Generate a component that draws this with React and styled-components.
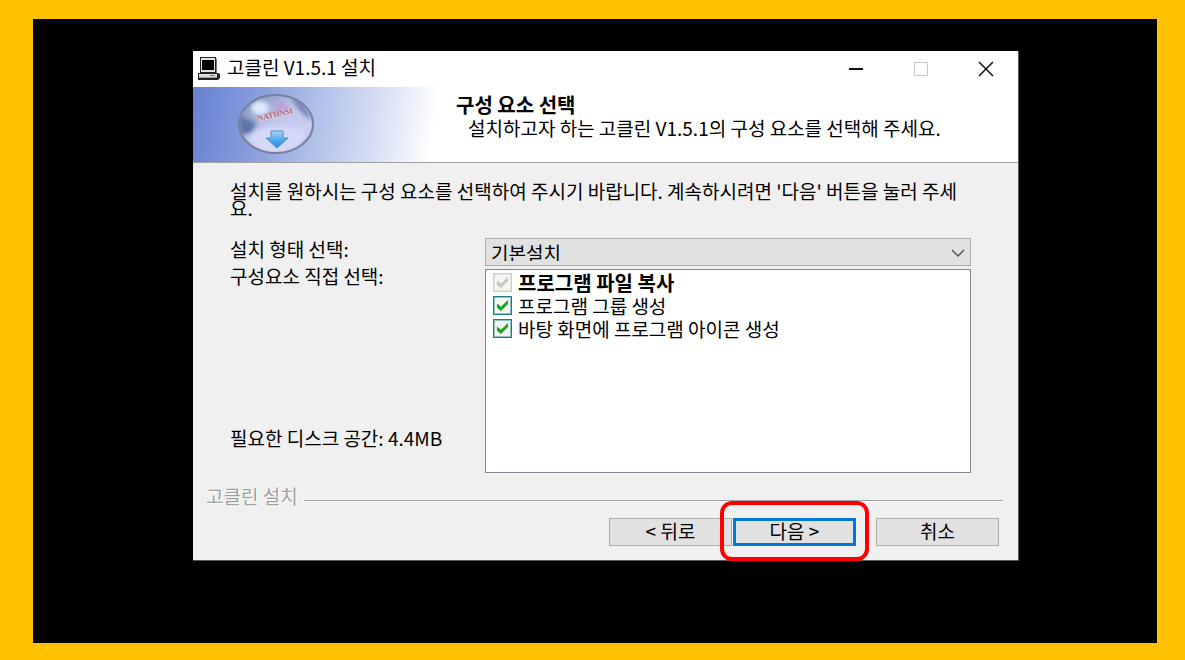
import React, { useState } from 'react';
import styled, { createGlobalStyle } from 'styled-components';

const GlobalStyle = createGlobalStyle`
  * {
    box-sizing: border-box;
  }
  body {
    margin: 0;
    background: #ffc000;
    font-family: "Noto Sans CJK KR", "Noto Sans", sans-serif;
    font-size: 19px;
    color: #000;
  }
  h1, p {
    margin: 0;
  }
`;

const Frame = styled.div`
  display: flex;
  min-height: 100vh;
  padding: 19px 28px 17px 33px;
`;

const Desktop = styled.main`
  flex: 1;
  padding: 32px 138px 80px 160px;
  background: #000;
`;

const Dialog = styled.section`
  background: #f0f0f0;
  border-right: 1px solid #555;
  border-bottom: 1px solid #555;
`;

const TitleBar = styled.header`
  display: flex;
  align-items: center;
  height: 36px;
  padding-left: 4px;
  background: #fff;
`;

const Title = styled.span`
  flex: 1;
  padding-left: 6px;
  line-height: 32px;
  align-self: flex-start;
`;

const WindowButton = styled.button`
  display: flex;
  align-items: center;
  justify-content: center;
  width: 65px;
  height: 34px;
  padding: 0;
  border: none;
  background: transparent;
  color: ${(props) => (props.disabled ? '#c8c8c8' : '#111')};
`;

const Banner = styled.div`
  display: flex;
  height: 76px;
  border-bottom: 1px solid #a0a0a0;
  background: linear-gradient(98deg, #6681d2 0, #8a9fdd 70px, #b4c2ea 130px, #d8e0f4 190px, #fff 245px);
`;

const LogoCell = styled.div`
  width: 263px;
  padding: 6px 0 0 44px;
`;

const Heading = styled.h1`
  padding-top: 6px;
  font-size: 20px;
  font-weight: 700;
  line-height: 24px;
`;

const SubHeading = styled.p`
  padding-left: 12px;
  line-height: 22px;
`;

const Body = styled.div`
  padding: 19px 47px 0 37px;
`;

const Intro = styled.p`
  line-height: 17px;
  word-break: break-all;
`;

const Form = styled.div`
  display: grid;
  grid-template-columns: 255px 1fr;
  row-gap: 3px;
  margin-top: 22px;
`;

const Label = styled.label`
  line-height: 22px;
`;

const SideColumn = styled.div`
  display: flex;
  flex-direction: column;
  justify-content: space-between;
  padding: 0 0 24px;
  line-height: 22px;
  margin-top: -4px;
`;

const SelectWrap = styled.div`
  position: relative;

  svg {
    position: absolute;
    right: 6px;
    top: 10px;
    pointer-events: none;
  }
`;

const Select = styled.select`
  display: block;
  width: 100%;
  height: 28px;
  padding: 0 24px 4px 5px;
  border: 1px solid #acacac;
  border-radius: 0;
  background: #e1e1e1;
  color: #000;
  font: inherit;
  appearance: none;
`;

const List = styled.div`
  height: 204px;
  padding: 1px 7px;
  border: 1px solid #828790;
  background: #fff;
`;

const Option = styled.label`
  display: flex;
  align-items: center;
  gap: 6px;
  height: 23px;
  line-height: 22px;
  font-size: ${(props) => (props.$required ? 20 : 19)}px;
  font-weight: ${(props) => (props.$required ? 700 : 400)};
`;

const Checkbox = styled.input`
  flex: none;
  display: grid;
  place-items: center;
  width: 19px;
  height: 19px;
  margin: 0;
  border: 1px solid #178080;
  background: #f4f4f4;
  box-shadow: inset 0 0 0 1px #8ec3c3;
  appearance: none;

  &:checked::before {
    content: "";
    width: 11px;
    height: 11px;
    background: #1ba51b;
    clip-path: polygon(0 32%, 36% 62%, 100% 0, 100% 36%, 36% 100%, 0 70%);
  }

  &:disabled {
    border-color: #d0d0c0;
    box-shadow: inset 0 0 0 1px #e4e4da;
  }

  &:disabled::before {
    background: #c8c8b8;
  }
`;

const Divider = styled.div`
  display: flex;
  align-items: center;
  gap: 6px;
  margin-top: 11px;
  padding: 0 15px 0 13px;
  line-height: 24px;
  color: #a0a0a0;
  text-shadow: 1px 1px 0 #fff;
`;

const Line = styled.hr`
  flex: 1;
  margin: 9px 0 0;
  border: none;
  border-top: 1px solid #a0a0a0;
  border-bottom: 1px solid #fff;
`;

const Actions = styled.div`
  display: flex;
  justify-content: flex-end;
  padding: 10px 19px 14px;
`;

const Button = styled.button`
  width: 123px;
  height: 28px;
  margin-left: ${(props) => props.$gap || 0}px;
  padding: 0 0 2px;
  border: ${(props) => (props.$primary ? '3px solid #0078d7' : '1px solid #adadad')};
  background: #e1e1e1;
  color: #000;
  font: inherit;
  line-height: 20px;
`;

const Marked = styled.div`
  position: relative;
  display: flex;
  margin-left: 1px;

  &::after {
    content: "";
    position: absolute;
    inset: -17px -13px -15px;
    border: 4px solid #f00;
    border-radius: 12px;
    pointer-events: none;
  }
`;

const ComputerIcon = () => (
  <svg width="24" height="24" viewBox="0 0 24 24" aria-hidden="true">
    <path d="M4 1h15l1 1v14H4z" fill="#777" />
    <path d="M3 0h16v16H3z" fill="#222" />
    <path d="M4 1h14v14H4z" fill="#e4e4e4" />
    <path d="M5 3h12v10H5z" fill="#000" />
    <path d="M1 16h20l2 1v4l-2 2H1z" fill="#222" />
    <path d="M2 17h18v4H2z" fill="#ddd" />
    <path d="M2 20h18v1H2z" fill="#999" />
    <path d="M13 18h5v1h-5z" fill="#777" />
  </svg>
);

const Logo = () => (
  <svg width="78" height="64" viewBox="0 0 78 64" aria-hidden="true">
    <defs>
      <linearGradient id="glass" x1="0" y1="0" x2="1" y2="1">
        <stop offset="0" stopColor="#6c80b0" />
        <stop offset="0.45" stopColor="#bfc6ea" />
        <stop offset="0.75" stopColor="#ccd0f2" />
        <stop offset="1" stopColor="#8ea4dd" />
      </linearGradient>
      <linearGradient id="arrow" x1="0" y1="0" x2="0" y2="1">
        <stop offset="0" stopColor="#a8d8f4" />
        <stop offset="0.6" stopColor="#44a6ee" />
        <stop offset="1" stopColor="#2b86d4" />
      </linearGradient>
      <filter id="soft" x="-30%" y="-30%" width="160%" height="160%">
        <feGaussianBlur stdDeviation="2" />
      </filter>
      <clipPath id="bubble">
        <ellipse cx="39" cy="31" rx="37" ry="29" />
      </clipPath>
    </defs>
    <ellipse cx="39" cy="31" rx="37" ry="29" fill="url(#glass)" />
    <g clipPath="url(#bubble)">
      <g filter="url(#soft)">
        <path d="M2 22l17 8-4 10L3 42z" fill="#5d75a8" />
        <path d="M52 4c12 3 20 12 22 24l-9-9z" fill="#6578ae" />
        <path d="M42 5l14 14-21 3z" fill="#b9a0dc" />
        <path d="M12 42c14-10 38-12 58-2-4 14-18 20-31 20S16 54 12 42z" fill="#d5d8f6" />
        <ellipse cx="23" cy="15" rx="9" ry="7" fill="#dfe9fb" />
      </g>
    </g>
    <ellipse cx="39" cy="31" rx="37" ry="29" fill="none" stroke="#77809c" strokeWidth="2" />
    <path d="M20 23l35-9 1 7-35 8z" fill="#d9cfe6" opacity="0.8" />
    <text
      x="21"
      y="28"
      transform="rotate(-13 21 28)"
      fontFamily="Liberation Serif, serif"
      fontSize="8"
      fontWeight="700"
      fill="#b0606c"
    >
      NATHNSI
    </text>
    <path d="M34 38h12v7h5L40 55 29 45h5z" fill="url(#arrow)" stroke="#4c8fc4" />
  </svg>
);

const components = [
  { id: 'files', name: '프로그램 파일 복사', required: true },
  { id: 'group', name: '프로그램 그룹 생성' },
  { id: 'icon', name: '바탕 화면에 프로그램 아이콘 생성' },
];

const App = () => {
  const [checked, setChecked] = useState({ files: true, group: true, icon: true });

  const toggle = (id) => setChecked({ ...checked, [id]: !checked[id] });

  return (
    <>
      <GlobalStyle />
      <Frame>
        <Desktop>
          <Dialog>
            <TitleBar>
              <ComputerIcon />
              <Title>고클린 V1.5.1 설치</Title>
              <WindowButton aria-label="최소화">
                <svg width="16" height="16"><path d="M1 8h14" stroke="currentColor" strokeWidth="2" /></svg>
              </WindowButton>
              <WindowButton aria-label="최대화" disabled>
                <svg width="16" height="16"><path d="M1.500 1.500h13v13h-13z" fill="none" stroke="currentColor" /></svg>
              </WindowButton>
              <WindowButton aria-label="닫기">
                <svg width="16" height="16"><path d="M1 1l14 14M15 1L1 15" stroke="currentColor" strokeWidth="1.500" /></svg>
              </WindowButton>
            </TitleBar>

            <Banner>
              <LogoCell><Logo /></LogoCell>
              <div>
                <Heading>구성 요소 선택</Heading>
                <SubHeading>설치하고자 하는 고클린 V1.5.1의 구성 요소를 선택해 주세요.</SubHeading>
              </div>
            </Banner>

            <Body>
              <Intro>
                설치를 원하시는 구성 요소를 선택하여 주시기 바랍니다. 계속하시려면 '다음' 버튼을 눌러 주세요.
              </Intro>
              <Form>
                <Label htmlFor="type">설치 형태 선택:</Label>
                <SelectWrap>
                  <Select id="type" defaultValue="basic">
                    <option value="basic">기본설치</option>
                  </Select>
                  <svg width="14" height="10"><path d="M1 2l6 6 6-6" fill="none" stroke="#555" strokeWidth="1.500" /></svg>
                </SelectWrap>
                <SideColumn>
                  <span id="parts">구성요소 직접 선택:</span>
                  <span>필요한 디스크 공간: 4.4MB</span>
                </SideColumn>
                <List role="group" aria-labelledby="parts">
                  {components.map((item) => (
                    <Option key={item.id} $required={item.required}>
                      <Checkbox
                        type="checkbox"
                        checked={checked[item.id]}
                        disabled={item.required}
                        onChange={() => toggle(item.id)}
                      />
                      {item.name}
                    </Option>
                  ))}
                </List>
              </Form>
            </Body>

            <Divider>
              고클린 설치
              <Line />
            </Divider>
            <Actions>
              <Button>&lt; 뒤로</Button>
              <Marked>
                <Button $primary>다음 &gt;</Button>
              </Marked>
              <Button $gap={20}>취소</Button>
            </Actions>
          </Dialog>
        </Desktop>
      </Frame>
    </>
  );
};

export default App;
